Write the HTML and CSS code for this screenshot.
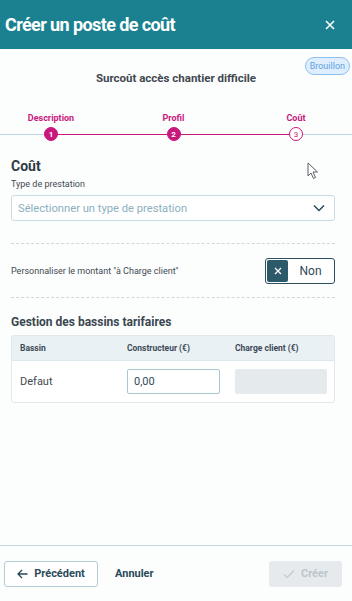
FILE: index.html
```html
<!DOCTYPE html>
<html>
<head>
  <title>Créer un poste de coût</title>
  <link rel="stylesheet" href="styles.css">
</head>
<body>
  <div class="modal">
    <header class="modal-header">
      <h1>Créer un poste de coût</h1>
      <button class="close" aria-label="Fermer">
        <svg width="10" height="10" viewBox="0 0 10 10"><path d="M1 1L9 9M9 1L1 9" stroke="#fff" stroke-width="1.6" fill="none"/></svg>
      </button>
    </header>

    <main class="modal-body">
      <span class="badge">Brouillon</span>
      <h2 class="subtitle">Surcoût accès chantier difficile</h2>

      <div class="stepper">
        <div class="step done"><span class="step-label">Description</span><span class="dot">1</span></div>
        <div class="step done"><span class="step-label">Profil</span><span class="dot">2</span></div>
        <div class="step current"><span class="step-label">Coût</span><span class="dot">3</span></div>
      </div>

      <section class="form">
        <h3 class="section-title">Coût</h3>
        <label class="field-label">Type de prestation</label>
        <div class="select">
          <span>Sélectionner un type de prestation</span>
          <svg width="12" height="8" viewBox="0 0 12 8"><path d="M1 1.5L6 6.5L11 1.5" stroke="#2b4a5a" stroke-width="1.5" fill="none"/></svg>
        </div>

        <div class="row-toggle">
          <span class="field-label">Personnaliser le montant "à Charge client"</span>
          <div class="toggle">
            <span class="toggle-knob">
              <svg width="8" height="8" viewBox="0 0 8 8"><path d="M1 1L7 7M7 1L1 7" stroke="#fff" stroke-width="1.3" fill="none"/></svg>
            </span>
            <span class="toggle-text">Non</span>
          </div>
        </div>

        <h4 class="table-title">Gestion des bassins tarifaires</h4>
        <div class="table">
          <div class="table-head">
            <span>Bassin</span>
            <span>Constructeur (€)</span>
            <span>Charge client (€)</span>
          </div>
          <div class="table-row">
            <span>Defaut</span>
            <span class="input">0,00</span>
            <span class="input disabled"></span>
          </div>
        </div>
      </section>

      <svg class="cursor" width="12" height="18" viewBox="0 0 12 18"><path d="M1 1V14L4 11L6.5 16.5L8.5 15.5L6 10H10.5Z" fill="#fff" stroke="#5a6066" stroke-width="1" stroke-linejoin="round"/></svg>
    </main>

    <footer class="modal-footer">
      <button class="btn btn-outline">
        <svg width="11" height="10" viewBox="0 0 11 10"><path d="M10.5 5H1.2M5 1L1 5L5 9" stroke="#2b4a5a" stroke-width="1.3" fill="none"/></svg>
        Précédent
      </button>
      <button class="btn btn-link">Annuler</button>
      <button class="btn btn-disabled">
        <svg width="12" height="10" viewBox="0 0 12 10"><path d="M1 5.5L4.2 8.5L11 1.5" stroke="#c0cad0" stroke-width="1.2" fill="none"/></svg>
        Créer
      </button>
    </footer>
  </div>
</body>
</html>
```

FILE: styles.css
```css
* {
  box-sizing: border-box;
}
body {
  margin: 0;
  font-family: Roboto, "Noto Sans", sans-serif;
  color: #3a4650;
  background: #fcfdfd;
}
.modal {
  display: flex;
  flex-direction: column;
  height: 100vh;
}
.modal-header {
  height: 49px;
  background: #1b8190;
  display: flex;
  align-items: center;
  justify-content: space-between;
  padding: 0 17px 0 5px;
}
.modal-header h1 {
  margin: 0;
  color: #fff;
  font-size: 18px;
  letter-spacing: -0.6px;
  font-weight: 700;
}
.close {
  border: 0;
  background: none;
  padding: 0;
  display: flex;
}
.modal-body {
  flex: 1;
  position: relative;
  padding-top: 22px;
}
.badge {
  position: absolute;
  top: 8px;
  right: 2px;
  font-size: 9px;
  line-height: 14px;
  padding: 1px 4px;
  color: #5ea3e0;
  background: #deeeff;
  border: 1px solid #8cc0f0;
  border-radius: 9px;
}
.subtitle {
  margin: 0;
  text-align: center;
  font-size: 11.5px;
  font-weight: 700;
  color: #3f4850;
  line-height: 14px;
}
.stepper {
  margin-top: 27px;
  display: flex;
  justify-content: space-between;
  padding: 0 56px 0 51px;
  height: 29px;
  background: linear-gradient(to right, #bcd6e6 51px, #c8187e 51px, #c8187e 296px, #bcd6e6 296px) 0 22px / 100% 1px no-repeat;
}
.step {
  width: 0;
  display: flex;
  flex-direction: column;
  align-items: center;
}
.step-label {
  font-size: 9px;
  font-weight: 700;
  color: #c8187e;
  white-space: nowrap;
  line-height: 12px;
}
.dot {
  margin-top: 3px;
  width: 14px;
  height: 14px;
  flex: none;
  border-radius: 50%;
  display: flex;
  align-items: center;
  justify-content: center;
  font-size: 8px;
  font-weight: 700;
  color: #fff;
  background: #c8187e;
  border: 1px solid #c8187e;
}
.step.current .dot {
  background: #fff;
  color: #c8187e;
  font-weight: 400;
}
.form {
  padding: 0 17px 0 11px;
  margin-top: 16px;
}
.section-title {
  margin: 0;
  font-size: 14px;
  font-weight: 700;
  color: #2f3b45;
  line-height: 18px;
}
.field-label {
  display: block;
  font-size: 9px;
  color: #3f4a52;
  margin-top: 3px;
  line-height: 12px;
}
.select {
  margin-top: 5px;
  height: 26px;
  border: 1px solid #c6dde5;
  border-radius: 3px;
  display: flex;
  align-items: center;
  justify-content: space-between;
  padding: 0 9px 0 6px;
  font-size: 11.2px;
  color: #8ab0c0;
  background: #fff;
}
.row-toggle {
  margin-top: 22px;
  border-top: 1px dashed #ccd9df;
  border-bottom: 1px dashed #ccd9df;
  height: 55px;
  display: flex;
  align-items: center;
  justify-content: space-between;
}
.row-toggle .field-label {
  margin: 0;
}
.toggle {
  width: 70px;
  height: 26px;
  border: 1px solid #2d4f5e;
  border-radius: 3px;
  display: flex;
  align-items: center;
  padding: 1px;
  background: #fff;
}
.toggle-knob {
  width: 21px;
  height: 22px;
  background: #2d5a6a;
  border-radius: 2px;
  display: flex;
  align-items: center;
  justify-content: center;
}
.toggle-text {
  flex: 1;
  text-align: center;
  font-size: 12px;
  color: #2f4a58;
}
.table-title {
  margin: 17px 0 0;
  font-size: 12px;
  font-weight: 700;
  color: #3a4650;
  line-height: 14px;
}
.table {
  margin-top: 6px;
  border: 1px solid #e0e8ec;
  border-radius: 3px;
  background: #fff;
}
.table-head,
.table-row {
  display: grid;
  grid-template-columns: 107px 108px 1fr;
  padding-left: 8px;
  align-items: center;
}
.table-head {
  height: 25px;
  background: #e9f1f5;
  border-bottom: 1px solid #dde7ec;
  font-size: 8.5px;
  font-weight: 700;
  color: #3d4a55;
}
.table-row {
  height: 41px;
  font-size: 11px;
  color: #3f4a52;
}
.input {
  width: 93px;
  height: 25px;
  border: 1px solid #a9c6d3;
  border-radius: 2px;
  display: flex;
  align-items: center;
  padding-left: 6px;
  font-size: 11px;
  color: #2f4a58;
}
.input.disabled {
  width: 92px;
  background: #e5eaec;
  border-color: #e5eaec;
}
.cursor {
  position: absolute;
  left: 307px;
  top: 113px;
}
.modal-footer {
  height: 56px;
  border-top: 1px solid #c6d7de;
  display: flex;
  align-items: center;
  padding: 0 10px 0 4px;
}
.btn {
  font-family: inherit;
  height: 26px;
  font-size: 11px;
  font-weight: 700;
  border-radius: 3px;
  display: flex;
  align-items: center;
  gap: 6px;
  padding: 0;
  color: #2b4a5a;
  background: none;
  border: 0;
}
.btn-outline {
  width: 94px;
  justify-content: center;
  border: 1px solid #b5cbd5;
  background: #fff;
}
.btn-link {
  margin-left: 17px;
}
.btn-disabled {
  margin-left: auto;
  width: 73px;
  justify-content: center;
  background: #e6eaed;
  color: #bcc6cc;
}
```
